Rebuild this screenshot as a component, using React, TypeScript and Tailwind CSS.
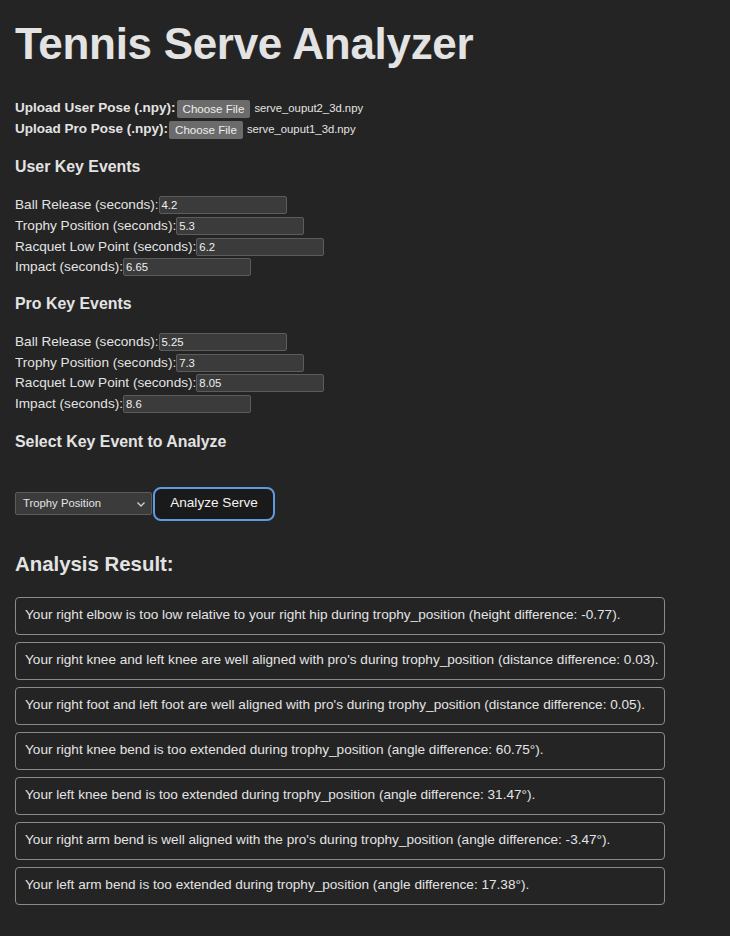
import React from "react";

const userEvents = [
  { label: "Ball Release (seconds):", value: "4.2" },
  { label: "Trophy Position (seconds):", value: "5.3" },
  { label: "Racquet Low Point (seconds):", value: "6.2" },
  { label: "Impact (seconds):", value: "6.65" },
];
const proEvents = [
  { label: "Ball Release (seconds):", value: "5.25" },
  { label: "Trophy Position (seconds):", value: "7.3" },
  { label: "Racquet Low Point (seconds):", value: "8.05" },
  { label: "Impact (seconds):", value: "8.6" },
];
const results = [
  "Your right elbow is too low relative to your right hip during trophy_position (height difference: -0.77).",
  "Your right knee and left knee are well aligned with pro's during trophy_position (distance difference: 0.03).",
  "Your right foot and left foot are well aligned with pro's during trophy_position (distance difference: 0.05).",
  "Your right knee bend is too extended during trophy_position (angle difference: 60.75°).",
  "Your left knee bend is too extended during trophy_position (angle difference: 31.47°).",
  "Your right arm bend is well aligned with the pro's during trophy_position (angle difference: -3.47°).",
  "Your left arm bend is too extended during trophy_position (angle difference: 17.38°).",
];

function EventRows({ items }: { items: { label: string; value: string }[] }) {
  return (
    <div className="flex flex-col">
      {items.map((it) => (
        <div key={it.label} className="flex items-center h-[20.7px] text-[13.6px]">
          <span>{it.label}</span>
          <div className="w-[128px] h-[18px] bg-[#3b3b3b] border border-[#5c5c5c] rounded-[2px] text-[11.3px] leading-[16px] pl-[2px] text-[#f0f0f0]">
            {it.value}
          </div>
        </div>
      ))}
    </div>
  );
}

function FileRow({ label, file }: { label: string; file: string }) {
  return (
    <div className="flex items-center h-[21px]">
      <span className="font-bold text-[13.5px]">{label}</span>
      <span className="ml-[1px] h-[18px] px-[6px] bg-[#6b6b6b] rounded-[2px] text-[11.6px] leading-[18px] text-[#eeeeee]">
        Choose File
      </span>
      <span className="ml-[4px] text-[11.3px]">{file}</span>
    </div>
  );
}

export default function App() {
  return (
    <div
      className="min-h-screen bg-[#242424] text-[#e3e3e3] px-[15px] pt-[18px] pb-[30px]"
      style={{ fontFamily: '"Liberation Sans", Arial, Helvetica, sans-serif' }}
    >
      <h1 className="text-[44px] leading-[52px] font-bold tracking-[-0.3px]">Tennis Serve Analyzer</h1>
      <div className="mt-[28px]">
        <FileRow label="Upload User Pose (.npy):" file="serve_ouput2_3d.npy" />
        <FileRow label="Upload Pro Pose (.npy):" file="serve_ouput1_3d.npy" />
      </div>
      <h2 className="mt-[17px] text-[15.9px] leading-[20px] font-bold">User Key Events</h2>
      <div className="mt-[18px]">
        <EventRows items={userEvents} />
      </div>
      <h2 className="mt-[16px] text-[15.9px] leading-[20px] font-bold">Pro Key Events</h2>
      <div className="mt-[18px]">
        <EventRows items={proEvents} />
      </div>
      <h2 className="mt-[17px] text-[15.9px] leading-[20px] font-bold">Select Key Event to Analyze</h2>
      <div className="mt-[35px] flex items-center">
        <div className="w-[137px] h-[23px] bg-[#3b3b3b] border border-[#5c5c5c] rounded-[2px] flex items-center justify-between pl-[7px] pr-[4px] text-[11.3px]">
          <span>Trophy Position</span>
          <svg width="12" height="12" viewBox="0 0 12 12" fill="none">
            <path d="M2.5 4.5 L6 8 L9.5 4.5" stroke="#d0d0d0" strokeWidth="1.3" />
          </svg>
        </div>
        <div className="ml-[1px] w-[122px] h-[34px] bg-[#1a1a1a] border-2 border-[#5d9ae0] rounded-[8px] flex items-center justify-center text-[13.6px] text-[#f2f2f2]">
          Analyze Serve
        </div>
      </div>
      <h2 className="mt-[31px] text-[20.4px] leading-[24px] font-bold">Analysis Result:</h2>
      <div className="mt-[21px] flex flex-col gap-[7px] w-[650px]">
        {results.map((r) => (
          <div
            key={r}
            className="h-[38px] border border-[#8a8a8a] rounded-[4px] flex items-center pl-[9px] text-[13.6px]"
          >
            {r}
          </div>
        ))}
      </div>
    </div>
  );
}
